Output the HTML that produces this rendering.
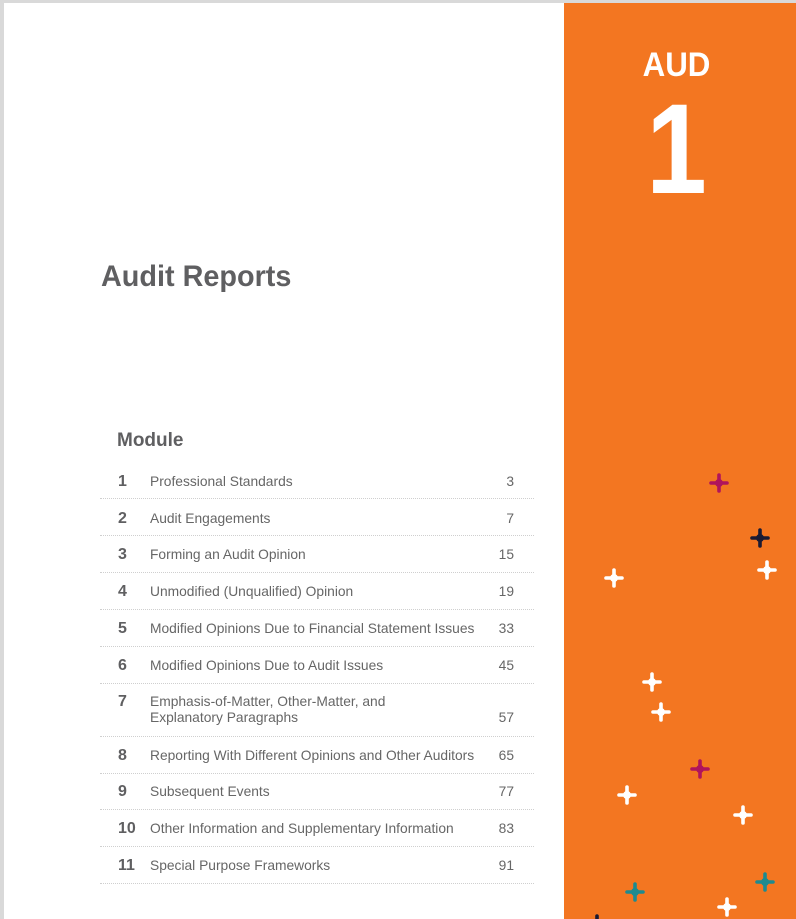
<!DOCTYPE html>
<html><head><meta charset="utf-8"><style>
*{margin:0;padding:0;box-sizing:border-box}
body{width:796px;height:919px;overflow:hidden;background:#fff;font-family:"Liberation Sans",sans-serif;position:relative}
.bt{position:absolute;left:0;top:0;width:796px;height:3px;background:#d9d9d9}
.bl{position:absolute;left:0;top:0;width:4px;height:919px;background:#d9d9d9}
.or{position:absolute;left:564px;top:3px;width:232px;height:916px;background:#f37621}
.aud{position:absolute;left:564px;width:225px;top:46px;text-align:center;color:#fff;font-weight:bold;font-size:34px;transform:scaleX(.92)}
.one{position:absolute;left:564px;width:225px;top:86px;text-align:center;color:#fff;font-weight:bold;font-size:128px;line-height:128px;transform:scaleX(.85)}
h1{position:absolute;left:101px;top:260px;font-size:30px;color:#5f5f61;font-weight:bold;transform:scaleX(.96);transform-origin:left}
h2{position:absolute;left:117px;top:430px;font-size:19px;color:#5f5f61;font-weight:bold}
.row{position:absolute;left:100px;width:434px;border-bottom:1px dotted #cfcfcf;color:#666;font-size:13.8px}
.row .n{position:absolute;left:18px;font-size:16px;font-weight:bold;color:#5f5f61}
.row .t{position:absolute;left:50px;line-height:16px}
.row .p{position:absolute;right:20px}
svg{position:absolute;left:0;top:0}
</style></head><body>
<div class="bt"></div><div class="bl"></div>
<div class="or"></div>
<div class="aud">AUD</div>
<div class="one">1</div>
<h1>Audit Reports</h1>
<h2>Module</h2>
<div class="row" style="top:464px;height:35px"><span class="n" style="top:9px">1</span><span class="t" style="top:10px">Professional Standards</span><span class="p" style="top:10px">3</span></div>
<div class="row" style="top:500px;height:36px"><span class="n" style="top:10px">2</span><span class="t" style="top:11px">Audit Engagements</span><span class="p" style="top:11px">7</span></div>
<div class="row" style="top:537px;height:36px"><span class="n" style="top:9px">3</span><span class="t" style="top:10px">Forming an Audit Opinion</span><span class="p" style="top:10px">15</span></div>
<div class="row" style="top:574px;height:36px"><span class="n" style="top:9px">4</span><span class="t" style="top:10px">Unmodified (Unqualified) Opinion</span><span class="p" style="top:10px">19</span></div>
<div class="row" style="top:611px;height:36px"><span class="n" style="top:9px">5</span><span class="t" style="top:10px">Modified Opinions Due to Financial Statement Issues</span><span class="p" style="top:10px">33</span></div>
<div class="row" style="top:648px;height:36px"><span class="n" style="top:9px">6</span><span class="t" style="top:10px">Modified Opinions Due to Audit Issues</span><span class="p" style="top:10px">45</span></div>
<div class="row" style="top:685px;height:52px"><span class="n" style="top:8px">7</span><span class="t" style="top:9px">Emphasis-of-Matter, Other-Matter, and<br>Explanatory Paragraphs</span><span class="p" style="top:25px">57</span></div>
<div class="row" style="top:738px;height:36px"><span class="n" style="top:9px">8</span><span class="t" style="top:10px">Reporting With Different Opinions and Other Auditors</span><span class="p" style="top:10px">65</span></div>
<div class="row" style="top:775px;height:35px"><span class="n" style="top:8px">9</span><span class="t" style="top:9px">Subsequent Events</span><span class="p" style="top:9px">77</span></div>
<div class="row" style="top:811px;height:36px"><span class="n" style="top:9px">10</span><span class="t" style="top:10px">Other Information and Supplementary Information</span><span class="p" style="top:10px">83</span></div>
<div class="row" style="top:848px;height:36px"><span class="n" style="top:9px">11</span><span class="t" style="top:10px">Special Purpose Frameworks</span><span class="p" style="top:10px">91</span></div>
<svg width="796" height="919">
<defs><g id="s"><path d="M0,-8 V8 M-8,0 H8" stroke-width="3.6" stroke-linecap="round" fill="none"/><circle r="3.5"/></g></defs>
<g fill="#fff" stroke="#fff">
<use href="#s" x="614" y="578"/><use href="#s" x="767" y="570"/><use href="#s" x="652" y="682"/><use href="#s" x="661" y="712"/><use href="#s" x="627" y="795"/><use href="#s" x="743" y="815"/><use href="#s" x="727" y="907"/>
</g>
<g fill="#b0145c" stroke="#b0145c"><use href="#s" x="719" y="483"/><use href="#s" x="700" y="769"/></g>
<g fill="#1a1a33" stroke="#1a1a33"><use href="#s" x="760" y="538"/><use href="#s" x="597" y="924"/></g>
<g fill="#1d8a8f" stroke="#1d8a8f"><use href="#s" x="635" y="892"/><use href="#s" x="765" y="882"/></g>
</svg>
</body></html>
